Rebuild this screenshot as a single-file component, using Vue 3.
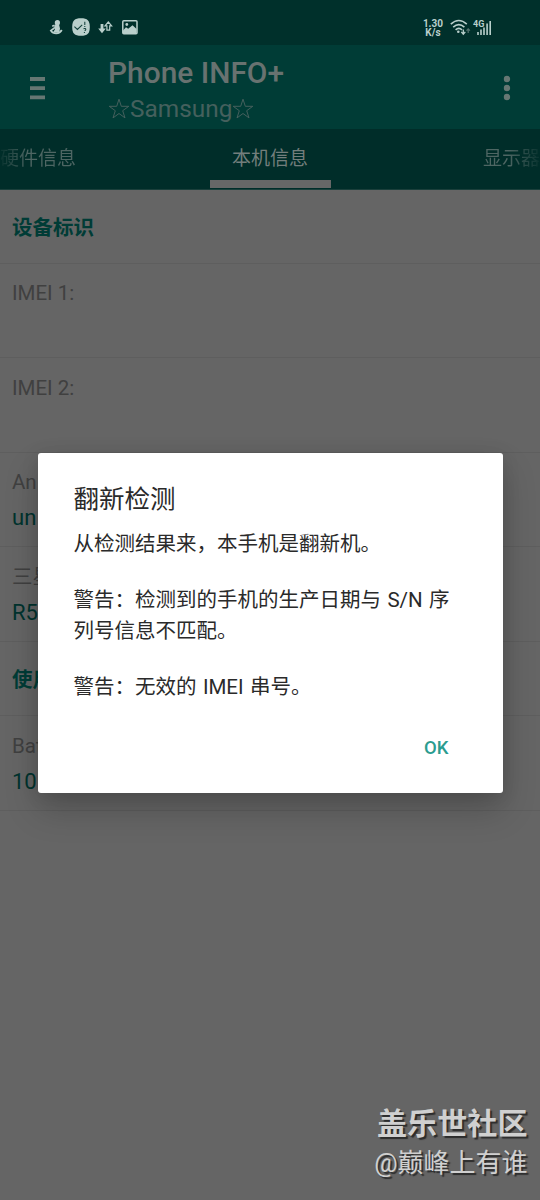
<script setup>
const rows = [
  { type: 'section', title: '设备标识' },
  { type: 'item', label: 'IMEI 1:', value: '' },
  { type: 'item', label: 'IMEI 2:', value: '' },
  { type: 'item', label: 'An', value: 'un' },
  { type: 'item', label: '三星', value: 'R5' },
  { type: 'section', title: '使用' },
  { type: 'item', label: 'Bat', value: '10' },
]
</script>

<template>
  <div class="screen">
    <header class="status">
      <div class="status-left">
        <svg class="s-person" width="14" height="16" viewBox="0 0 14 16">
          <circle cx="8.4" cy="2.7" r="2.6" fill="#b9cfcb" />
          <path d="M6 4.6L5 7.4L6 9.4L3.8 12.6L10.2 12.8L11 8.4L10 4.6Z" fill="#b9cfcb" />
          <path d="M5.6 5.2L3.2 6.2M5.4 8L1.8 10.6Q3.6 13.4 7.2 13.4Q11.2 13.2 12.8 10" fill="none" stroke="#b9cfcb" stroke-width="1.7" />
        </svg>
        <svg class="s-check" width="18" height="18" viewBox="0 0 18 18">
          <path d="M9 0.2C15.5 0.2 17.8 2.5 17.8 9S15.5 17.8 9 17.8S0.2 15.5 0.2 9S2.5 0.2 9 0.2Z" fill="#b9cfcb" />
          <path d="M2.4 8.6L5.4 11.5L10.2 6.9M12.8 3.8V6.9M12.8 8V9M11.5 10.8Q13.8 9.9 13.8 11.5Q13.8 12.3 12.6 12.9M12.4 14V15" fill="none" stroke="#12403a" stroke-width="1.05" />
        </svg>
        <svg class="s-arrows" width="15" height="13" viewBox="0 0 15 13">
          <path d="M2.6 3H5.4V7.6H7.8L4 12.2L0.2 7.6H2.6Z" fill="#b9cfcb" />
          <path d="M10.3 1L13.6 4.8H11.7V9.2H8.9V4.8H7Z" fill="none" stroke="#b9cfcb" stroke-width="1.2" />
        </svg>
        <svg class="s-image" width="16" height="15" viewBox="0 0 16 15">
          <rect x="0.8" y="0.8" width="14.2" height="13" rx="1" fill="none" stroke="#b9cfcb" stroke-width="1.5" />
          <path d="M1 10.5L4 7.3L6.2 8.8L10.5 5.2L14.6 9V13.5H1Z" fill="#b9cfcb" />
          <circle cx="4.8" cy="4.5" r="1.4" fill="#b9cfcb" />
        </svg>
      </div>
      <div class="status-right">
        <div class="speed"><span>1.30</span><span>K/s</span></div>
        <svg class="s-wifi" width="22" height="18" viewBox="0 0 22 18">
          <g fill="none" stroke="#b9cfcb" stroke-width="1.6">
            <path d="M0.8 5.2Q8.8 -2.2 16.8 5.2" />
            <path d="M3.2 8.2Q8.8 3 14.4 8.2" />
            <path d="M5.6 10.9Q8.8 8 12 10.9" />
          </g>
          <circle cx="8.3" cy="12.8" r="1.3" fill="#b9cfcb" />
          <path d="M13.3 10.5V15M11.3 12.9L13.3 15.2L15.3 12.9" fill="none" stroke="#b9cfcb" stroke-width="1.3" />
          <path d="M18.2 14V9.8M16.5 11.7L18.2 9.8L19.9 11.7" fill="none" stroke="#54736f" stroke-width="1.2" />
        </svg>
        <svg class="s-signal" width="19" height="17" viewBox="0 0 19 17">
          <text x="0" y="7.8" class="net">4G</text>
          <path d="M5 13V16M8 10.5V16M11 8.5V16M14.1 4.6V16M17.2 2V16" stroke="#b9cfcb" stroke-width="1.6" />
        </svg>
      </div>
    </header>

    <div class="appbar">
      <svg class="menu" width="15" height="23" viewBox="0 0 15 23">
        <path d="M0 2H15M0 11.2H15M0 20.4H15" stroke="#667773" stroke-width="3.8" />
      </svg>
      <div class="titles">
        <h1>Phone INFO+</h1>
        <div class="sub">
          <svg width="22" height="22" viewBox="0 0 22 22"><path class="star" d="M11 1.2L13.3 8.3H20.8L14.7 12.7L17 19.9L11 15.5L5 19.9L7.3 12.7L1.2 8.3H8.7Z" /></svg>
          <span>Samsung</span>
          <svg width="22" height="22" viewBox="0 0 22 22"><path class="star" d="M11 1.2L13.3 8.3H20.8L14.7 12.7L17 19.9L11 15.5L5 19.9L7.3 12.7L1.2 8.3H8.7Z" /></svg>
        </div>
      </div>
      <svg class="more" width="8" height="26" viewBox="0 0 8 26">
        <circle cx="4" cy="4" r="3.2" /><circle cx="4" cy="13" r="3.2" /><circle cx="4" cy="22" r="3.2" />
      </svg>
    </div>

    <nav class="tabs">
      <span class="tab prev">硬件信息</span>
      <span class="tab active">本机信息</span>
      <span class="tab next">显示器</span>
    </nav>

    <main class="list">
      <div v-for="(row, i) in rows" :key="i" :class="row.type">
        <template v-if="row.type === 'section'">{{ row.title }}</template>
        <template v-else>
          <div class="label">{{ row.label }}</div>
          <div class="value">{{ row.value }}</div>
        </template>
      </div>
    </main>

    <div class="dialog">
      <h2>翻新检测</h2>
      <p>从检测结果来，本手机是翻新机。</p>
      <p>警告：检测到的手机的生产日期与 S/N 序<br />列号信息不匹配。</p>
      <p>警告：无效的 IMEI 串号。</p>
      <div class="actions"><button>OK</button></div>
    </div>

    <div class="watermark">
      <div class="brand">盖乐世社区</div>
      <div class="user">@巅峰上有谁</div>
    </div>
  </div>
</template>

<style>
html, body { margin: 0; background: #656565; }
</style>

<style scoped>
.screen {
  position: relative;
  width: 540px;
  height: 1200px;
  overflow: hidden;
  background: #656565;
  font-family: Roboto, "Noto Sans CJK SC", sans-serif;
}
.screen * { box-sizing: border-box; }
svg { display: block; flex: none; }
.status {
  height: 45px;
  background: #00302b;
  display: flex;
  justify-content: space-between;
  padding: 0 48px 0 49px;
}
.status-left, .status-right { display: flex; align-items: flex-start; }
.s-person { margin-top: 20px; }
.s-check { margin: 18px 0 0 9px; }
.s-arrows { margin: 21px 0 0 8px; }
.s-image { margin: 20px 0 0 9px; }
.speed {
  display: flex;
  flex-direction: column;
  align-items: center;
  margin: 18.5px 7px 0 0;
  color: #b9cfcb;
  font-size: 10px;
  line-height: 9px;
  font-weight: 700;
}
.s-wifi { margin: 18.5px 1px 0 0; }
.s-signal { margin-top: 19px; }
.net { font: 700 9px Roboto, sans-serif; fill: #b9cfcb; }
.appbar {
  height: 84px;
  background: #003c36;
  display: flex;
  align-items: flex-start;
  padding: 0 29px 0 30px;
}
.menu { margin-top: 32px; }
.titles { margin: 10px 0 0 63px; flex: 1; }
h1 { margin: 0; font-size: 29.9px; line-height: 35px; font-weight: 500; color: #687270; }
.sub {
  display: flex;
  align-items: center;
  height: 38px;
  font-size: 24.4px;
  line-height: 38px;
  color: #45605d;
}
.star { fill: none; stroke: #45605d; stroke-width: 1; }
.more { margin-top: 30px; fill: #667773; }
.tabs {
  height: 60.5px;
  background: #002d29;
  border-bottom: 1px solid #1a3f3b;
  display: flex;
  justify-content: space-between;
  font-size: 19px;
  line-height: 59px;
  white-space: nowrap;
}
.tab { color: #4e6663; width: 121px; height: 58.5px; }
.prev { background: linear-gradient(90deg, #08332f, #4e6663 28px); background-clip: text; color: transparent; }
.active { color: #737e7c; text-align: center; border-bottom: 8px solid #676767; }
.next { text-align: right; background: linear-gradient(270deg, #08332f, #4e6663 32px); background-clip: text; color: transparent; }
.section {
  height: 74.5px;
  padding: 1px 12px 0;
  border-bottom: 1px solid #5e5e5e;
  font-size: 20.5px;
  line-height: 74px;
  font-weight: 700;
  color: #003c36;
}
.item { height: 94.45px; padding: 15.4px 12px 0; border-bottom: 1px solid #5e5e5e; }
.label { height: 30px; font-size: 20.5px; line-height: 28px; color: #404040; }
.value { font-size: 22px; line-height: 40.5px; color: #00332e; }
.dialog {
  position: absolute;
  left: 37.5px;
  top: 452.5px;
  width: 465px;
  height: 340.5px;
  padding: 28px 36px 0;
  border-radius: 3px;
  background: #fff;
  box-shadow: 0 17px 34px rgba(0, 0, 0, 0.2), 0 3px 18px rgba(0, 0, 0, 0.1);
  color: #2a2a2a;
}
h2 { margin: 0 0 11px; font-size: 25.5px; line-height: 37px; font-weight: 400; }
p { margin: 0 0 25px; font-size: 20.5px; line-height: 31px; white-space: nowrap; word-spacing: 1.3px; }
.actions { display: flex; justify-content: flex-end; padding: 8px 18px 0 0; }
button {
  border: 0;
  padding: 0;
  background: none;
  font: 500 18.5px/24px Roboto, sans-serif;
  color: #2b9c8f;
}
.watermark {
  position: absolute;
  right: 12.5px;
  top: 1103.5px;
  text-align: right;
  color: #d0d0d0;
  text-shadow: 2px 2px 1px #2c2c2c;
  white-space: nowrap;
}
.brand { font-size: 30.1px; line-height: 40px; font-weight: 700; }
.user { font-size: 26px; line-height: 39px; }
</style>
